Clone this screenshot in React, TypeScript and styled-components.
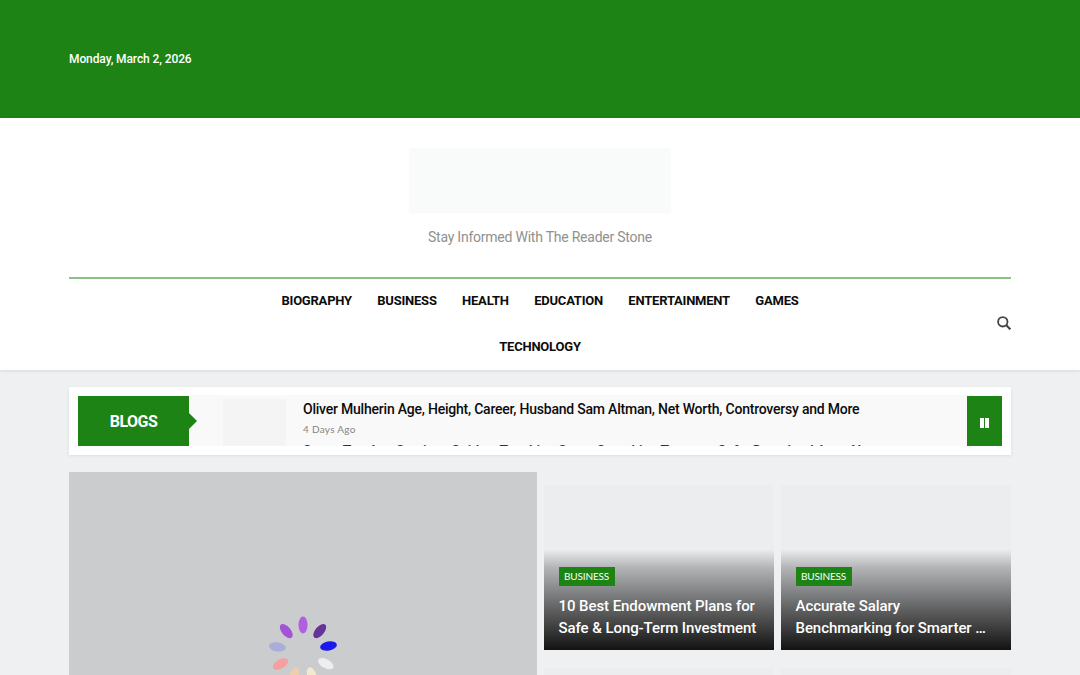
import React from "react";
import styled, { createGlobalStyle } from "styled-components";

const Global = createGlobalStyle`
  html, body { margin: 0; padding: 0; height: 675px; overflow: hidden; background: #eef0f2; }
  body { font-family: Roboto, "Liberation Sans", sans-serif; }
  * { box-sizing: border-box; }
`;

const Page = styled.div`
  width: 1080px;
  height: 675px;
  overflow: hidden;
`;

const TopBar = styled.div`
  height: 118px;
  background: #1c8314;
  padding: 0 69px;
  display: flex;
  align-items: center;
`;

const DateText = styled.span`
  color: #fff;
  font-size: 12px;
  font-weight: 500;
  letter-spacing: -0.1px;
`;

const Header = styled.header`
  background: #fff;
  height: 252px;
  padding: 30px 69px 0;
  box-shadow: 0 1px 3px rgba(0, 0, 0, 0.1);
  display: flex;
  flex-direction: column;
  align-items: center;
`;

const LogoBox = styled.div`
  width: 262px;
  height: 66px;
  background: #f9fafa;
`;

const Tagline = styled.p`
  margin: 15px 0 0;
  height: 18px;
  line-height: 19px;
  font-size: 14px;
  letter-spacing: -0.23px;
  color: #8f918f;
`;

const NavArea = styled.div`
  margin-top: 31px;
  width: 100%;
  border-top: 2px solid #8cc186;
  display: flex;
  align-items: center;
`;

const NavList = styled.nav`
  flex: 1;
  display: flex;
  flex-wrap: wrap;
  justify-content: center;
  padding-left: 14px;
`;

const NavLink = styled.a`
  height: 45.5px;
  line-height: 43px;
  padding: 0 12.7px;
  font-size: 13px;
  font-weight: 700;
  letter-spacing: -0.22px;
  color: #0c0c0c;
`;

const NavBreak = styled.span`
  flex-basis: 100%;
  height: 0;
`;

const SearchButton = styled.span`
  width: 14px;
  height: 14px;
  margin-bottom: 4px;
  color: #444;
  display: flex;
`;

const Main = styled.main`
  padding: 17px 69px 0;
`;

const Ticker = styled.section`
  height: 68px;
  background: #fff;
  padding: 8px 9px 9px;
  box-shadow: 0 1px 3px rgba(0, 0, 0, 0.08);
`;

const TickerInner = styled.div`
  height: 51px;
  background: #f9f9f9;
  display: flex;
  overflow: hidden;
`;

const TickerLabel = styled.div`
  width: 111px;
  height: 50px;
  margin-top: 1px;
  background: #1c8314;
  color: #fff;
  font-size: 16px;
  font-weight: 700;
  letter-spacing: -0.55px;
  display: flex;
  align-items: center;
  justify-content: center;
  position: relative;
  flex-shrink: 0;
  &::after {
    content: "";
    position: absolute;
    left: 100%;
    top: 17px;
    border-left: 8px solid #1c8314;
    border-top: 8px solid transparent;
    border-bottom: 8px solid transparent;
  }
`;

const Thumb = styled.div`
  width: 63px;
  height: 47px;
  margin: 4px 0 0 34px;
  background: #f4f4f4;
  flex-shrink: 0;
`;

const TickerBody = styled.div`
  flex: 1;
  min-width: 0;
  padding-left: 17px;
`;

const TickerTitle = styled.h3`
  margin: 0;
  padding-top: 6px;
  height: 26px;
  line-height: 17px;
  font-size: 14px;
  font-weight: 500;
  letter-spacing: -0.22px;
  color: #0c0c0c;
  white-space: nowrap;
`;

const TickerDate = styled.div`
  height: 16px;
  line-height: 16px;
  font-family: Lato, Inter, sans-serif;
  font-size: 10px;
  letter-spacing: 0.28px;
  color: #858585;
`;

const TickerNext = styled.div`
  margin-top: 6px;
  line-height: 17px;
  font-size: 14px;
  font-weight: 500;
  letter-spacing: -0.22px;
  color: #333;
  white-space: nowrap;
`;

const PauseButton = styled.div`
  width: 35px;
  height: 50px;
  margin-top: 1px;
  background: #1c8314;
  display: flex;
  align-items: center;
  justify-content: center;
  gap: 1.5px;
  flex-shrink: 0;
`;

const PauseBar = styled.i`
  display: block;
  width: 4px;
  height: 10px;
  margin-top: 4px;
  background: #fff;
`;

const Grid = styled.section`
  margin-top: 17px;
  display: flex;
  gap: 7px;
`;

const Feature = styled.div`
  width: 468px;
  height: 400px;
  background: #cbccce;
  position: relative;
`;

const Spinner = styled.svg`
  position: absolute;
  left: 193.7px;
  top: 139px;
  width: 80px;
  height: 80px;
`;

const Side = styled.div`
  flex: 1;
  display: grid;
  grid-template-columns: 230.5px 230.5px;
  column-gap: 6.5px;
  row-gap: 18px;
  padding-top: 13px;
  align-content: start;
`;

const Card = styled.article`
  height: 165px;
  background: #ecedef;
  position: relative;
  overflow: hidden;
`;

const CardOverlay = styled.div`
  position: absolute;
  left: 0;
  right: 0;
  bottom: 0;
  height: 100%;
  padding: 0 15px 11px;
  background: linear-gradient(to bottom, rgba(0,0,0,0) 39%, rgba(0,0,0,0.24) 50%, rgba(0,0,0,0.55) 72%, rgba(0,0,0,0.92) 100%);
  display: flex;
  flex-direction: column;
  justify-content: flex-end;
`;

const Badge = styled.span`
  align-self: flex-start;
  height: 19px;
  line-height: 19px;
  padding: 0 5.5px;
  background: #1c8314;
  color: #fff;
  font-family: Lato, Inter, sans-serif;
  font-size: 10px;
  font-weight: 400;
  letter-spacing: -0.15px;
  margin-bottom: 9px;
`;

const CardTitle = styled.h2`
  margin: 0;
  color: #fff;
  font-size: 15px;
  font-weight: 500;
  letter-spacing: -0.07px;
  line-height: 22px;
  white-space: pre-line;
`;

const LowerCard = styled.article`
  height: 100px;
  background: #ecedef;
`;

const petals: [number, string][] = [
  [0, "#b05fdf"],
  [40, "#663399"],
  [79, "#1a1aee"],
  [119, "#eceef0"],
  [160, "#f3e9cf"],
  [200, "#eccfae"],
  [240, "#f79e9e"],
  [279, "#a9add8"],
  [320, "#a452d6"],
];

const cards = [
  "10 Best Endowment Plans for\nSafe & Long-Term Investment",
  "Accurate Salary\nBenchmarking for Smarter …",
];

export default function App() {
  return (
    <Page>
      <Global />
      <TopBar>
        <DateText>Monday, March 2, 2026</DateText>
      </TopBar>
      <Header>
        <LogoBox />
        <Tagline>Stay Informed With The Reader Stone</Tagline>
        <NavArea>
          <NavList>
            <NavLink>BIOGRAPHY</NavLink>
            <NavLink>BUSINESS</NavLink>
            <NavLink>HEALTH</NavLink>
            <NavLink>EDUCATION</NavLink>
            <NavLink>ENTERTAINMENT</NavLink>
            <NavLink>GAMES</NavLink>
            <NavBreak />
            <NavLink>TECHNOLOGY</NavLink>
          </NavList>
          <SearchButton>
            <svg viewBox="0 0 14 14" width="14" height="14" fill="none" stroke="currentColor" strokeWidth="1.8">
              <circle cx="5.8" cy="5.8" r="4.7" />
              <path d="M9.3 9.3L13.4 13.4" strokeWidth="2.1" />
            </svg>
          </SearchButton>
        </NavArea>
      </Header>
      <Main>
        <Ticker>
          <TickerInner>
            <TickerLabel>BLOGS</TickerLabel>
            <Thumb />
            <TickerBody>
              <TickerTitle>Oliver Mulherin Age, Height, Career, Husband Sam Altman, Net Worth, Controversy and More</TickerTitle>
              <TickerDate>4 Days Ago</TickerDate>
              <TickerNext>Seven Top Aso Services Guides: Teaching Some Searching Terms to Safer Download Apps Now</TickerNext>
            </TickerBody>
            <PauseButton>
              <PauseBar />
              <PauseBar />
            </PauseButton>
          </TickerInner>
        </Ticker>
        <Grid>
          <Feature>
            <Spinner viewBox="0 0 80 80">
              {petals.map(([angle, color]) => (
                <ellipse key={angle} cx="40" cy="14" rx="4.5" ry="8.5" fill={color} transform={`rotate(${angle} 40 40)`} />
              ))}
            </Spinner>
          </Feature>
          <Side>
            {cards.map((title) => (
              <Card key={title}>
                <CardOverlay>
                  <Badge>BUSINESS</Badge>
                  <CardTitle>{title}</CardTitle>
                </CardOverlay>
              </Card>
            ))}
            <LowerCard />
            <LowerCard />
          </Side>
        </Grid>
      </Main>
    </Page>
  );
}
